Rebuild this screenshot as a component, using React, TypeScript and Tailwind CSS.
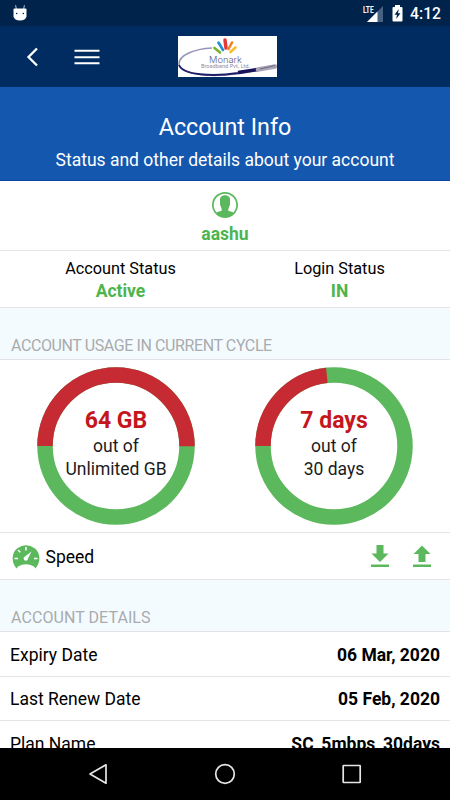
import React from 'react';
import { IoIosContact } from 'react-icons/io';

interface UsageRingProps {
  fraction: number;
  value: string;
  total: string;
}

const RADIUS = 71;
const CIRCUMFERENCE = 2 * Math.PI * RADIUS;

const details = [
  { label: 'Expiry Date', value: '06 Mar, 2020' },
  { label: 'Last Renew Date', value: '05 Feb, 2020' },
  { label: 'Plan Name', value: 'SC_5mbps_30days' },
];

function StatusBar() {
  return (
    <div className="flex h-[26px] shrink-0 items-center justify-between bg-[#00234c] pr-[9px] pl-[12px] text-white">
      <svg width="16" height="18" viewBox="0 0 16 18" className="mb-[1px]">
        <path d="M4.3 5L3.6 1.2M11.7 5L12.4 1.2" stroke="#b9c4d2" strokeWidth="1" />
        <path d="M1.5 5.5Q1.5 4.500 2.500 4.500H13.500Q14.500 4.500 14.500 5.500V12.500Q13.500 16.500 8 16.500Q2.500 16.500 1.500 12.500Z" fill="white" />
        <circle cx="4.700" cy="9.500" r=".8" fill="#00234c" />
        <circle cx="11.300" cy="9.500" r=".8" fill="#00234c" />
      </svg>
      <div className="flex items-center pt-[1px]">
        <div className="flex items-start">
          <span className="-mr-[7px] w-[11px] origin-left scale-x-[0.7] text-[9.500px] leading-[8px] font-bold">LTE</span>
          <svg width="16" height="16" viewBox="0 0 16 16">
            <path d="M16 0V16H0Z" fill="#456283" />
            <path d="M10.500 5.500V16H0Z" fill="white" />
          </svg>
        </div>
        <svg width="11" height="17" viewBox="0 0 11 17" className="ml-[9px]">
          <path d="M3 0H8V2H9.500Q10.500 2 10.500 3V15.500Q10.500 16.500 9.500 16.500H1.500Q.5 16.500 .5 15.500V3Q.5 2 1.500 2H3Z" fill="white" />
          <path d="M6.800 4L2.500 9.700H5L4.200 14L8.500 8.200H6Z" fill="#00234c" />
        </svg>
        <span className="mt-[1px] ml-[7px] text-[15.700px] leading-[20px] font-medium">4:12</span>
      </div>
    </div>
  );
}

function Logo() {
  return (
    <svg width="99" height="41" viewBox="0 0 99 41">
      <rect width="99" height="41" fill="white" />
      <path d="M34 12C16 13 1 19 1 28C1 37 26 42 58 38Q78 36 95 30" fill="none" stroke="#9693b8" strokeWidth="1.500" />
      <path d="M1 29C5 39 34 41 60 37L80 33" fill="none" stroke="#1f1d68" strokeWidth="1.800" />
      <path d="M60 36.500L80 33.500" stroke="#17145c" strokeWidth="3.500" />
      <path d="M80 33.500L97 30.500" stroke="#aaa6b6" strokeWidth="4.500" strokeLinecap="round" />
      <path d="M82 33L97 29.500" stroke="#6e6789" strokeWidth="1" />
      <g strokeLinecap="round" strokeWidth="2.600">
        <path d="M36.500 12L42 16.500" stroke="#79b52c" />
        <path d="M40.500 6.500L45 14" stroke="#238fd0" />
        <path d="M47 4L48 12" stroke="#e23a38" strokeWidth="3.500" />
        <path d="M54 6.500L50.500 13" stroke="#f0802a" />
        <path d="M57.500 11.500L52.500 16" stroke="#f5bd29" />
      </g>
      <text x="31" y="26.500" textLength="33" lengthAdjust="spacingAndGlyphs" className="font-['Inter'] text-[9px] font-light" fill="#5f5b80">Monark</text>
      <text x="23" y="32" textLength="49" lengthAdjust="spacingAndGlyphs" className="font-['Inter'] text-[5px]" fill="#89859d">Broadband Pvt. Ltd.</text>
    </svg>
  );
}

function Header() {
  return (
    <header className="flex h-[61px] shrink-0 items-center bg-[#002c62]">
      <svg width="110" height="30" viewBox="0 0 110 30" fill="none" stroke="white" className="mr-[68px]">
        <path d="M37 6.500L28.500 15L37 23.500" strokeWidth="2.300" />
        <path d="M74.500 8.800H99.500M74.500 15.200H99.500M74.500 21.300H99.500" strokeWidth="2.100" />
      </svg>
      <Logo />
    </header>
  );
}

function UsageRing({ fraction, value, total }: UsageRingProps) {
  return (
    <div className="grid h-[158px] w-[158px] place-items-center">
      <svg width="158" height="158" viewBox="0 0 158 158" fill="none" className="col-start-1 row-start-1">
        <circle cx="79" cy="79" r={RADIUS} stroke="#5cb85c" strokeWidth="15.500" />
        <circle
          cx="79"
          cy="79"
          r={RADIUS}
          stroke="#c62a33"
          strokeWidth="15.500"
          strokeDasharray={`${fraction * CIRCUMFERENCE} ${CIRCUMFERENCE}`}
          transform="rotate(180 79 79)"
        />
      </svg>
      <div className="col-start-1 row-start-1 pb-[4px] text-center text-[17.500px] leading-[23px] text-[#1b1b1b]">
        <p className="mb-[1px] text-[23px] leading-[27px] font-bold text-[#c4161c]">{value}</p>
        <p>out of</p>
        <p>{total}</p>
      </div>
    </div>
  );
}

function SectionTitle({ children }: { children: React.ReactNode }) {
  return (
    <h2 className="flex h-[52px] shrink-0 items-end border-b border-[#e2e4e5] bg-[#f4fbff] pb-[3px] pl-[11px] text-[16px] leading-[20px] text-[#a9abad]">
      {children}
    </h2>
  );
}

function SpeedIcon() {
  return (
    <svg width="28" height="25" viewBox="0 0 28 25">
      <path d="M4.500 24.500C-1 18 -.5 9 5 4.500Q14 -2 23 4.500C28.500 9 29 18 23.500 24.500L22 22.500Q14 18 6 22.500Z" fill="#5cb85c" />
      <path d="M14 3V6.500M6 6L8.300 8.300M2.500 14.500H6M22 14.500H25.500" stroke="white" strokeWidth="1.500" />
      <path d="M19.500 7.500L16 14.500A2.200 2.200 0 1 1 13 12.500Z" fill="white" />
    </svg>
  );
}

function NavBar() {
  return (
    <nav className="flex h-[52px] shrink-0 items-center justify-between bg-black px-[85px]">
      <svg width="26" height="26" viewBox="0 0 26 26" fill="none" stroke="#e6e6e6" strokeWidth="1.700" strokeLinejoin="round">
        <path d="M21 3.800V22.200L5 13Z" />
      </svg>
      <svg width="26" height="26" viewBox="0 0 26 26" fill="none" stroke="#e6e6e6" strokeWidth="1.700">
        <circle cx="13" cy="13" r="9.300" />
      </svg>
      <svg width="26" height="26" viewBox="0 0 26 26" fill="none" stroke="#e6e6e6" strokeWidth="1.700">
        <rect x="4.200" y="4.500" width="17" height="17" rx=".5" />
      </svg>
    </nav>
  );
}

export default function App() {
  return (
    <div className="flex h-[800px] w-[450px] flex-col overflow-hidden bg-white font-['Roboto',sans-serif] text-black">
      <StatusBar />
      <Header />

      <div className="h-[94px] shrink-0 border-b border-[#0b46a5] bg-[#1457ae] pt-[25px] text-center text-white">
        <h1 className="text-[23.300px] leading-[30px]">Account Info</h1>
        <p className="mt-[7px] text-[17.500px] leading-[22px]">Status and other details about your account</p>
      </div>

      <main className="flex min-h-0 flex-1 flex-col overflow-hidden">
        <div className="flex h-[70px] shrink-0 flex-col items-center border-b border-[#e3e4e5] pt-[8px]">
          <IoIosContact className="h-[32px] w-[32px] text-[#5cb85c]" />
          <p className="mt-[2px] text-[17.500px] leading-[22px] font-bold text-[#4cb54c]">aashu</p>
        </div>

        <div className="flex h-[57px] shrink-0 border-b border-[#e3e4e5] pt-[7px] pl-[11px] text-center">
          <div className="w-[219px]">
            <p className="text-[16.250px] leading-[22px]">Account Status</p>
            <p className="text-[17.500px] leading-[23px] font-bold text-[#4cb54c]">Active</p>
          </div>
          <div className="w-[219px]">
            <p className="text-[16.250px] leading-[22px]">Login Status</p>
            <p className="text-[17.500px] leading-[23px] font-bold text-[#4cb54c]">IN</p>
          </div>
        </div>

        <SectionTitle>
          <span className="tracking-[-0.4px]">ACCOUNT USAGE IN CURRENT CYCLE</span>
        </SectionTitle>

        <div className="flex h-[173px] shrink-0 justify-between border-b border-[#e3e4e5] pt-[7px] pr-[37px] pl-[37px]">
          <UsageRing fraction={0.5} value="64 GB" total="Unlimited GB" />
          <UsageRing fraction={7 / 30} value="7 days" total="30 days" />
        </div>

        <div className="flex h-[47px] shrink-0 items-center border-b border-[#e3e4e5] pr-[19.500px] pl-[12px]">
          <SpeedIcon />
          <span className="ml-[5.500px] flex-1 pt-[2px] text-[17.500px]">Speed</span>
          <div className="flex gap-[24px]">
            <svg width="18" height="23" viewBox="0 0 18 23" fill="#5cb85c">
              <path d="M5.500 0H12.500V8.500H17.500L9 17L.5 8.500H5.500Z" />
              <path d="M0 19.500H18V22H0Z" />
            </svg>
            <svg width="18" height="23" viewBox="0 0 18 23" fill="#5cb85c">
              <path d="M5.500 17H12.500V9H17.500L9 .5L.5 9H5.500Z" />
              <path d="M0 19.500H18V22H0Z" />
            </svg>
          </div>
        </div>

        <SectionTitle>
          <span className="tracking-[0.07px]">ACCOUNT DETAILS</span>
        </SectionTitle>

        {details.map(row => (
          <div key={row.label} className="flex h-[44.500px] shrink-0 items-center justify-between border-b border-[#e3e4e5] px-[10px] pt-[2px] text-[17.500px]">
            <span>{row.label}</span>
            <span className="font-bold">{row.value}</span>
          </div>
        ))}
      </main>

      <NavBar />
    </div>
  );
}
